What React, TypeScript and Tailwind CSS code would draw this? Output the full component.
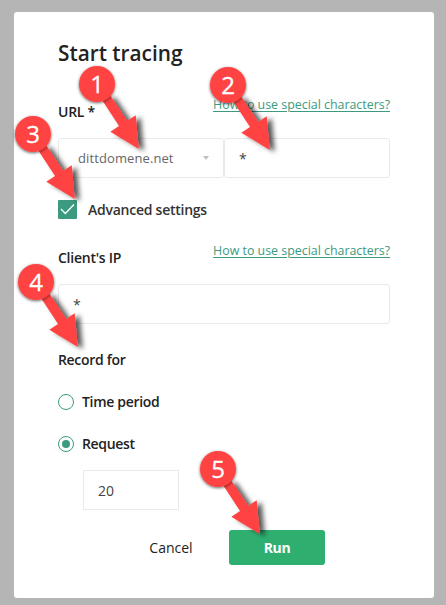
import React from "react";

function HelpLink() {
  return (
    <a className="mt-px text-[12.4px] leading-4 text-[#3c9a80] underline decoration-1 underline-offset-2" href="#">
      How to use special characters?
    </a>
  );
}

function Radio({ label, checked }: { label: string; checked?: boolean }) {
  return (
    <label className="flex h-4 items-center gap-2">
      <span className="flex size-4 items-center justify-center rounded-full border border-[#3c9a80]">
        {checked && <span className="size-2 rounded-full bg-[#3c9a80]" />}
      </span>
      <span className="text-[14px] font-semibold leading-4 tracking-[-0.32px]">{label}</span>
    </label>
  );
}

function Marker({ n, x, y }: { n: number; x: number; y: number }) {
  return (
    <g transform={`translate(${x} ${y})`}>
      <g filter="url(#arrow-shadow)">
        <path d="M5 16 13 11 30.3 36.7 38.7 31.3 41.8 65 13.3 47.7 22 42Z" fill="#ff4343" />
      </g>
      <g filter="url(#disc-shadow)">
        <circle r="18" fill="#ff4343" />
      </g>
      <text y="9" textAnchor="middle" fill="#fff" stroke="#fff" strokeWidth="0.3" fontSize="24">
        {n}
      </text>
    </g>
  );
}

export default function App() {
  return (
    <div className="relative h-[605px] w-[446px] overflow-hidden bg-[#b5b5b5] pb-[7px] pl-[14px] pr-3 pt-3 font-['Open_Sans','Noto_Sans',sans-serif] text-[#222]">
      <main className="flex h-[586px] w-[420px] flex-col rounded-[3px] bg-white px-11 pt-[27px]">
        <h1 className="h-7 text-[20.8px] font-semibold leading-7">Start tracing</h1>

        <div className="mt-[29px] flex h-8 items-start justify-between">
          <span className="mt-2 text-[14px] font-semibold leading-4 tracking-[-0.25px]">URL *</span>
          <HelpLink />
        </div>
        <div className="mt-[10px] flex h-10 text-[13px] text-[#666]">
          <div className="flex w-[166px] items-center justify-between rounded-[3px] border border-[#e9e9e9] pl-[19px] pr-[14px]">
            <span className="mt-0.5 tracking-[0.1px]">dittdomene.net</span>
            <span className="border-x-[3px] border-t-4 border-x-transparent border-t-[#c0c0c0]" />
          </div>
          <div className="flex flex-1 items-center rounded-[3px] border border-[#e9e9e9] pl-[14px] text-[14px] text-[#444]">*</div>
        </div>

        <label className="mt-[22px] flex h-[19px] items-center gap-[11px]">
          <span className="flex size-[19px] items-center justify-center rounded-[1px] bg-[#3c9a80]">
            <svg width="15" height="13" viewBox="0 0 15 13" fill="none" stroke="#fff" strokeWidth="1.3">
              <path d="M1 6 5.3 10.5 14 1.5" />
            </svg>
          </span>
          <span className="text-[14px] font-semibold leading-4 tracking-[-0.25px] text-[#333]">Advanced settings</span>
        </label>

        <div className="mt-[23px] flex h-8 items-start justify-between">
          <span className="mt-2 text-[14px] font-semibold leading-4 tracking-[-0.25px]">Client's IP</span>
          <HelpLink />
        </div>
        <div className="mt-[10px] flex h-10 items-center rounded-[3px] border border-[#e9e9e9] pl-[14px] text-[14px] text-[#444]">*</div>

        <span className="mt-7 h-4 text-[14px] font-semibold leading-4 tracking-[-0.32px]">Record for</span>
        <div className="mt-[26px] flex flex-col gap-[26px]">
          <Radio label="Time period" />
          <Radio label="Request" checked />
        </div>
        <div className="ml-[25px] mt-[18px] flex h-10 w-24 items-center border border-[#e9e9e9] pl-[14px] text-[14px] text-[#444]">20</div>

        <div className="mt-5 flex h-[35px]">
          <button className="ml-[91px] w-11 text-[14px]">Cancel</button>
          <button className="ml-9 w-24 rounded-[3px] bg-[#2eaf6f] text-[14px] font-bold tracking-[-0.4px] text-white">Run</button>
        </div>
      </main>

      <svg className="pointer-events-none absolute inset-0" width="446" height="605" viewBox="0 0 446 605">
        <defs>
          <filter id="arrow-shadow" x="-30%" y="-30%" width="180%" height="180%">
            <feDropShadow dx="5" dy="2" stdDeviation="2.5" floodColor="#000" floodOpacity="0.65" />
          </filter>
          <filter id="disc-shadow" x="-30%" y="-30%" width="160%" height="160%">
            <feDropShadow dx="0" dy="1" stdDeviation="1.5" floodColor="#000" floodOpacity="0.6" />
          </filter>
        </defs>
        <Marker n={1} x={97} y={84} />
        <Marker n={2} x={228} y={85} />
        <Marker n={3} x={33} y={134} />
        <Marker n={4} x={36} y={282} />
        <Marker n={5} x={218} y={469} />
      </svg>
    </div>
  );
}
